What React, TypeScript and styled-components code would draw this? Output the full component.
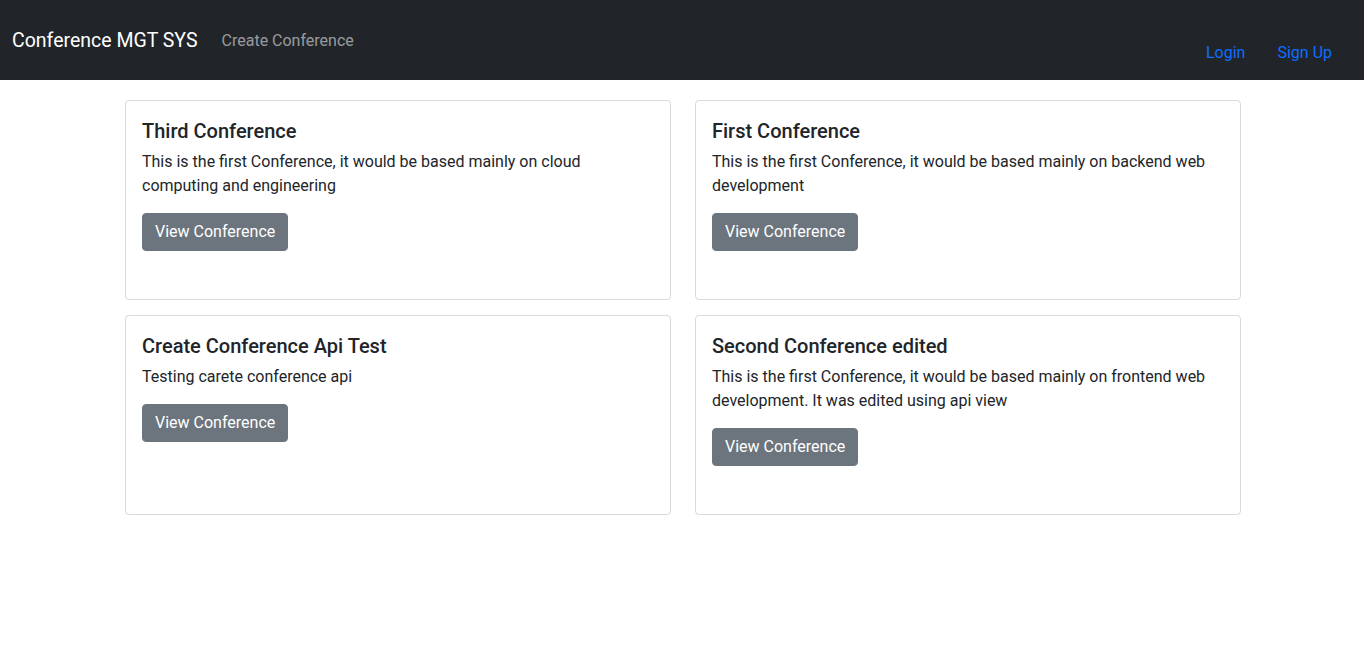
import React from "react";
import styled, { createGlobalStyle } from "styled-components";

const FONT = `Roboto, "Noto Sans", sans-serif`;

const Global = createGlobalStyle`
  body { margin: 0; font-family: ${FONT}; color: #212529; background: #fff; }
  * { box-sizing: border-box; }
`;

const Navbar = styled.nav`
  height: 80px;
  background: #212529;
  display: flex;
  align-items: center;
  padding: 2px 12px 0;
`;
const Brand = styled.a`
  font-size: 19.5px;
  line-height: 30px;
  color: #fff;
  margin-right: 16px;
  text-decoration: none;
`;
const NavLink = styled.a<{ $accent?: boolean }>`
  font-size: 16px;
  line-height: 24px;
  padding: 8px;
  color: ${(p) => (p.$accent ? "#0d6efd" : "rgba(255,255,255,0.55)")};
  text-decoration: none;
`;
const RightNav = styled.div`
  margin-left: auto;
  display: flex;
  gap: 16px;
  padding-top: 24px;
  padding-right: 12px;
`;
const Grid = styled.main`
  width: 1116px;
  margin: 20px 0 0 125px;
  display: grid;
  grid-template-columns: 546px 546px;
  column-gap: 24px;
  row-gap: 15px;
`;
const Card = styled.div`
  height: 200px;
  border: 1px solid rgba(0, 0, 0, 0.15);
  border-radius: 4px;
  padding: 16px;
`;
const Title = styled.h5`
  margin: 0 0 7px;
  padding-top: 2px;
  font-size: 20px;
  font-weight: 500;
  line-height: 24px;
`;
const Text = styled.p`
  margin: 0 0 15px;
  font-size: 16px;
  line-height: 24px;
`;
const Button = styled.button`
  font-family: inherit;
  font-size: 16px;
  line-height: 24px;
  padding: 6px 12px;
  color: #fff;
  background: #6c757d;
  border: 1px solid #6c757d;
  border-radius: 4px;
  cursor: pointer;
`;

const cards = [
  { t: "Third Conference", d: "This is the first Conference, it would be based mainly on cloud computing and engineering" },
  { t: "First Conference", d: "This is the first Conference, it would be based mainly on backend web development" },
  { t: "Create Conference Api Test", d: "Testing carete conference api" },
  { t: "Second Conference edited", d: "This is the first Conference, it would be based mainly on frontend web development. It was edited using api view" },
];

export default function App() {
  return (
    <>
      <Global />
      <Navbar>
        <Brand href="#">Conference MGT SYS</Brand>
        <NavLink href="#">Create Conference</NavLink>
        <RightNav>
          <NavLink $accent href="#">Login</NavLink>
          <NavLink $accent href="#">Sign Up</NavLink>
        </RightNav>
      </Navbar>
      <Grid>
        {cards.map((c) => (
          <Card key={c.t}>
            <Title>{c.t}</Title>
            <Text>{c.d}</Text>
            <Button>View Conference</Button>
          </Card>
        ))}
      </Grid>
    </>
  );
}
